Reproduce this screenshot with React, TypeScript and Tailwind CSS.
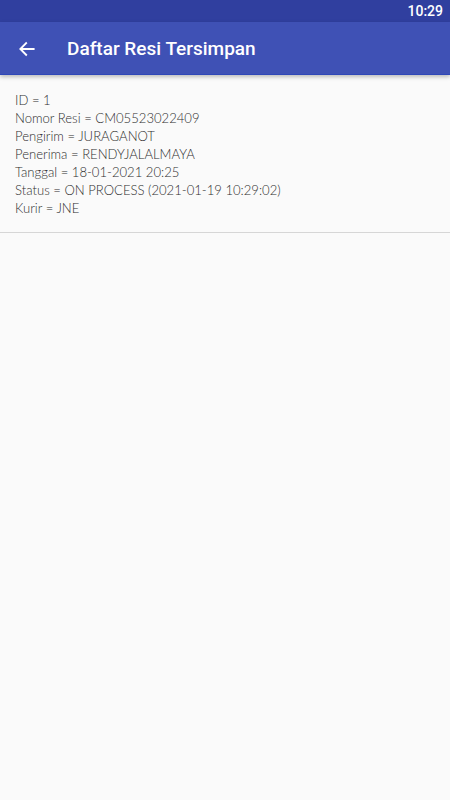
const rows = [
  'ID = 1',
  'Nomor Resi = CM05523022409',
  'Pengirim = JURAGANOT',
  'Penerima = RENDYJALALMAYA',
  'Tanggal = 18-01-2021 20:25',
  'Status = ON PROCESS (2021-01-19 10:29:02)',
  'Kurir = JNE',
];

export default function App() {
  return (
    <div className="min-h-[800px] w-[450px] bg-[#fafafa] font-['Roboto',sans-serif]">
      {/* status bar */}
      <div className="flex h-[22px] items-center justify-end bg-[#303f9f] px-[7px] text-[14px] font-medium text-white">
        10:29
      </div>
      {/* toolbar */}
      <div className="relative z-10 flex h-[53px] items-center border-b border-[#2f47b8] bg-[#3f51b5] pt-[2px] shadow-[0_2px_4px_rgba(0,0,0,0.25)]">
        <div className="flex w-[52px] items-center justify-center pl-[2px]">
          <svg width="20" height="20" viewBox="0 0 24 24" fill="none" stroke="white" strokeWidth="2.2" strokeLinecap="square">
            <path d="M20 12H5M11 5l-7 7 7 7" />
          </svg>
        </div>
        <h1 className="ml-[15px] text-[19px] font-medium text-white">Daftar Resi Tersimpan</h1>
      </div>
      {/* list item */}
      <div className="border-b border-[#d6d6d6] px-[15px] pb-[15px] pt-[16px] font-['Lato',sans-serif] text-[13.1px] font-light leading-[18px] text-[#2e2e2e]">
        {rows.map((r) => (
          <div key={r}>{r}</div>
        ))}
      </div>
    </div>
  );
}
